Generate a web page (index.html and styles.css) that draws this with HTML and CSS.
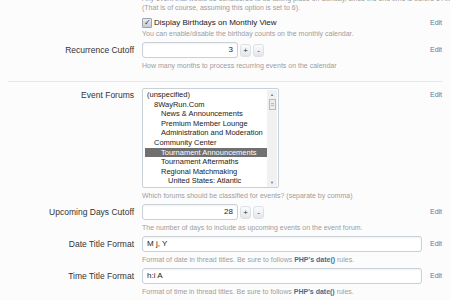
FILE: index.html
```html
<!DOCTYPE html>
<html lang="en">
<head>
  <meta charset="UTF-8" />
  <title>Calendar Options</title>
  <link rel="stylesheet" href="styles.css">
</head>
<body>
  <div class="options">
    <div class="row row-cont">
      <div class="label"></div>
      <div class="ctrl">
        <p class="hint">Any event that would be considered to be taking place on Sunday, since the end time is before 6 AM</p>
        <p class="hint">(That is of course, assuming this option is set to 6).</p>
      </div>
    </div>

    <div class="row row-check">
      <div class="label"></div>
      <div class="ctrl">
        <label class="check"><span class="box">&#10003;</span>Display Birthdays on Monthly View</label>
        <p class="hint">You can enable/disable the birthday counts on the monthly calendar.</p>
      </div>
      <a class="edit" href="#">Edit</a>
    </div>

    <div class="row">
      <div class="label">Recurrence Cutoff</div>
      <div class="ctrl">
        <div class="spin">
          <div class="input num">3</div>
          <span class="btn">+</span>
          <span class="btn">-</span>
        </div>
        <p class="hint">How many months to process recurring events on the calendar</p>
      </div>
      <a class="edit" href="#">Edit</a>
    </div>

    <div class="row row-sep">
      <div class="label">Event Forums</div>
      <div class="ctrl">
        <div class="listbox">
          <ul class="items">
            <li>(unspecified)</li>
            <li class="d1">8WayRun.Com</li>
            <li class="d2">News &amp; Announcements</li>
            <li class="d2">Premium Member Lounge</li>
            <li class="d2">Administration and Moderation</li>
            <li class="d1">Community Center</li>
            <li class="d2 selected">Tournament Announcements</li>
            <li class="d2">Tournament Aftermaths</li>
            <li class="d2">Regional Matchmaking</li>
            <li class="d3">United States: Atlantic</li>
          </ul>
          <div class="scrollbar">
            <span class="arrow">&#9650;</span>
            <span class="thumb"></span>
            <span class="arrow down">&#9660;</span>
          </div>
        </div>
        <p class="hint">Which forums should be classified for events? (separate by comma)</p>
      </div>
      <a class="edit" href="#">Edit</a>
    </div>

    <div class="row">
      <div class="label">Upcoming Days Cutoff</div>
      <div class="ctrl">
        <div class="spin">
          <div class="input num">28</div>
          <span class="btn">+</span>
          <span class="btn">-</span>
        </div>
        <p class="hint">The number of days to include as upcoming events on the event forum.</p>
      </div>
      <a class="edit" href="#">Edit</a>
    </div>

    <div class="row">
      <div class="label">Date Title Format</div>
      <div class="ctrl">
        <div class="input wide">M j, Y</div>
        <p class="hint">Format of date in thread titles. Be sure to follows <a href="#">PHP's date()</a> rules.</p>
      </div>
      <a class="edit" href="#">Edit</a>
    </div>

    <div class="row">
      <div class="label">Time Title Format</div>
      <div class="ctrl">
        <div class="input wide">h:i A</div>
        <p class="hint">Format of time in thread titles. Be sure to follows <a href="#">PHP's date()</a> rules.</p>
      </div>
      <a class="edit" href="#">Edit</a>
    </div>

    <div class="row">
      <div class="label"></div>
      <div class="ctrl">
        <div class="spin">
          <div class="input num"></div>
          <span class="btn">+</span>
          <span class="btn">-</span>
        </div>
      </div>
    </div>
  </div>
</body>
</html>
```

FILE: styles.css
```css
body {
  margin: 0;
  background: #fcfcfd;
  font-family: 'Liberation Sans', Arial, sans-serif;
  color: #2a2a2a;
  overflow: hidden;
}
.options {
  margin-top: -6px;
  padding: 0 8px;
}
.row {
  display: grid;
  grid-template-columns: 126px 1fr 12px;
  column-gap: 8px;
  padding-top: 4px;
}
.label {
  text-align: right;
  font-size: 8.5px;
  line-height: 16px;
  color: #333;
}
.ctrl {
  min-width: 0;
}
.edit {
  font-size: 7px;
  line-height: 16px;
  color: #4f7ea3;
  text-decoration: none;
  white-space: nowrap;
}
.hint {
  margin: 3px 0 0;
  font-size: 7px;
  line-height: 9px;
  color: #9c9c9c;
  white-space: nowrap;
}
.hint a {
  color: #3d6f96;
  font-weight: bold;
  text-decoration: none;
}
.row-cont {
  padding-top: 0;
}
.row-cont .hint {
  margin: 0;
}
.row-check {
  padding-top: 6px;
}
.row-check .edit {
  line-height: 10px;
}
.row-check .hint {
  margin-top: 1px;
}
.check {
  display: flex;
  align-items: center;
  gap: 2px;
  font-size: 8px;
  line-height: 10px;
  color: #222;
}
.box {
  width: 8px;
  height: 8px;
  border: 1px solid #9aa3ad;
  border-radius: 1px;
  background: linear-gradient(#e8ebee, #c9ced4);
  font-size: 8px;
  line-height: 8px;
  text-align: center;
  color: #1e3a6a;
}
.spin {
  display: flex;
  align-items: center;
  gap: 2px;
}
.input {
  box-sizing: border-box;
  height: 16px;
  border: 1px solid #c9d0d6;
  border-radius: 3px;
  background: #fff;
  box-shadow: inset 0 1px 2px rgba(0, 0, 0, 0.06);
  font-size: 8px;
  line-height: 14px;
  padding: 0 4px;
  color: #222;
}
.num {
  width: 96px;
  text-align: right;
}
.wide {
  width: 100%;
}
.btn {
  box-sizing: border-box;
  width: 11px;
  height: 13px;
  border: 1px solid #dde1e5;
  border-radius: 3px;
  background: linear-gradient(#fbfbfc, #e3e6e9);
  font-size: 8px;
  line-height: 11px;
  text-align: center;
  color: #333;
}
.row-sep {
  margin-top: 11px;
  border-top: 1px solid #dfe8ee;
  padding-top: 6px;
}
.row-sep .label {
  line-height: 14px;
}
.row-sep .edit {
  line-height: 14px;
}
.listbox {
  box-sizing: border-box;
  width: 137px;
  height: 100px;
  border: 1px solid #c9d0d6;
  border-radius: 2px;
  background: #fff;
  display: flex;
  padding: 1px 1px 0 2px;
}
.items {
  flex: 1;
  list-style: none;
  margin: 0;
  padding: 0;
  font-size: 7.5px;
  line-height: 9.6px;
  color: #222;
  overflow: hidden;
}
.items li {
  padding-left: 2px;
  white-space: nowrap;
}
.items .d1 { padding-left: 9px; }
.items .d2 { padding-left: 16px; }
.items .d3 { padding-left: 23px; }
.items .selected {
  background: #707070;
  color: #fff;
}
.scrollbar {
  width: 10px;
  display: flex;
  flex-direction: column;
  align-items: center;
  background: #f1f1f1;
}
.arrow {
  font-size: 4px;
  line-height: 9px;
  color: #777;
}
.arrow.down {
  margin-top: auto;
}
.thumb {
  width: 7px;
  height: 11px;
  border: 1px solid #b9b9b9;
  box-sizing: border-box;
  background: repeating-linear-gradient(#e9e9e9 0 1px, #bdbdbd 1px 2px) center / 3px 5px no-repeat, #ececec;
}
```
